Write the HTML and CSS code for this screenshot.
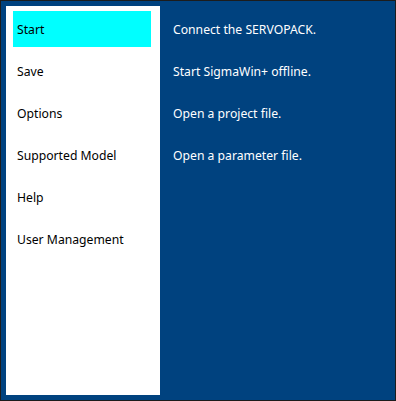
FILE: index.html
```html
<!DOCTYPE html>
<html>
<head>
<meta charset="utf-8">
<link rel="stylesheet" href="styles.css">
</head>
<body>
<div class="frame">
  <nav class="menu">
    <div class="item selected">Start</div>
    <div class="item">Save</div>
    <div class="item">Options</div>
    <div class="item">Supported Model</div>
    <div class="item">Help</div>
    <div class="item">User Management</div>
  </nav>
  <div class="content">
    <div class="item">Connect the SERVOPACK.</div>
    <div class="item">Start SigmaWin+ offline.</div>
    <div class="item">Open a project file.</div>
    <div class="item">Open a parameter file.</div>
  </div>
</div>
</body>
</html>
```
FILE: styles.css
```css
html, body {
  margin: 0;
  padding: 0;
}
.frame {
  box-sizing: border-box;
  width: 396px;
  height: 401px;
  border: 1px solid #1c1c1c;
  background: #00427f;
  display: flex;
  padding: 5px 0 5px 5px;
  font-family: "Noto Sans", "Open Sans", sans-serif;
  font-size: 12.2px;
}
.menu {
  box-sizing: border-box;
  width: 154px;
  background: #ffffff;
  padding: 5px 9px 5px 7px;
  display: flex;
  flex-direction: column;
  gap: 6px;
  color: #000;
}
.item {
  box-sizing: border-box;
  height: 36px;
  line-height: 35px;
  padding: 1px 0 0 4px;
  white-space: nowrap;
}
.selected {
  background: #00ffff;
}
.content {
  flex: 1;
  padding: 5px 0 0 9px;
  display: flex;
  flex-direction: column;
  gap: 6px;
  color: #fff;
}
```
